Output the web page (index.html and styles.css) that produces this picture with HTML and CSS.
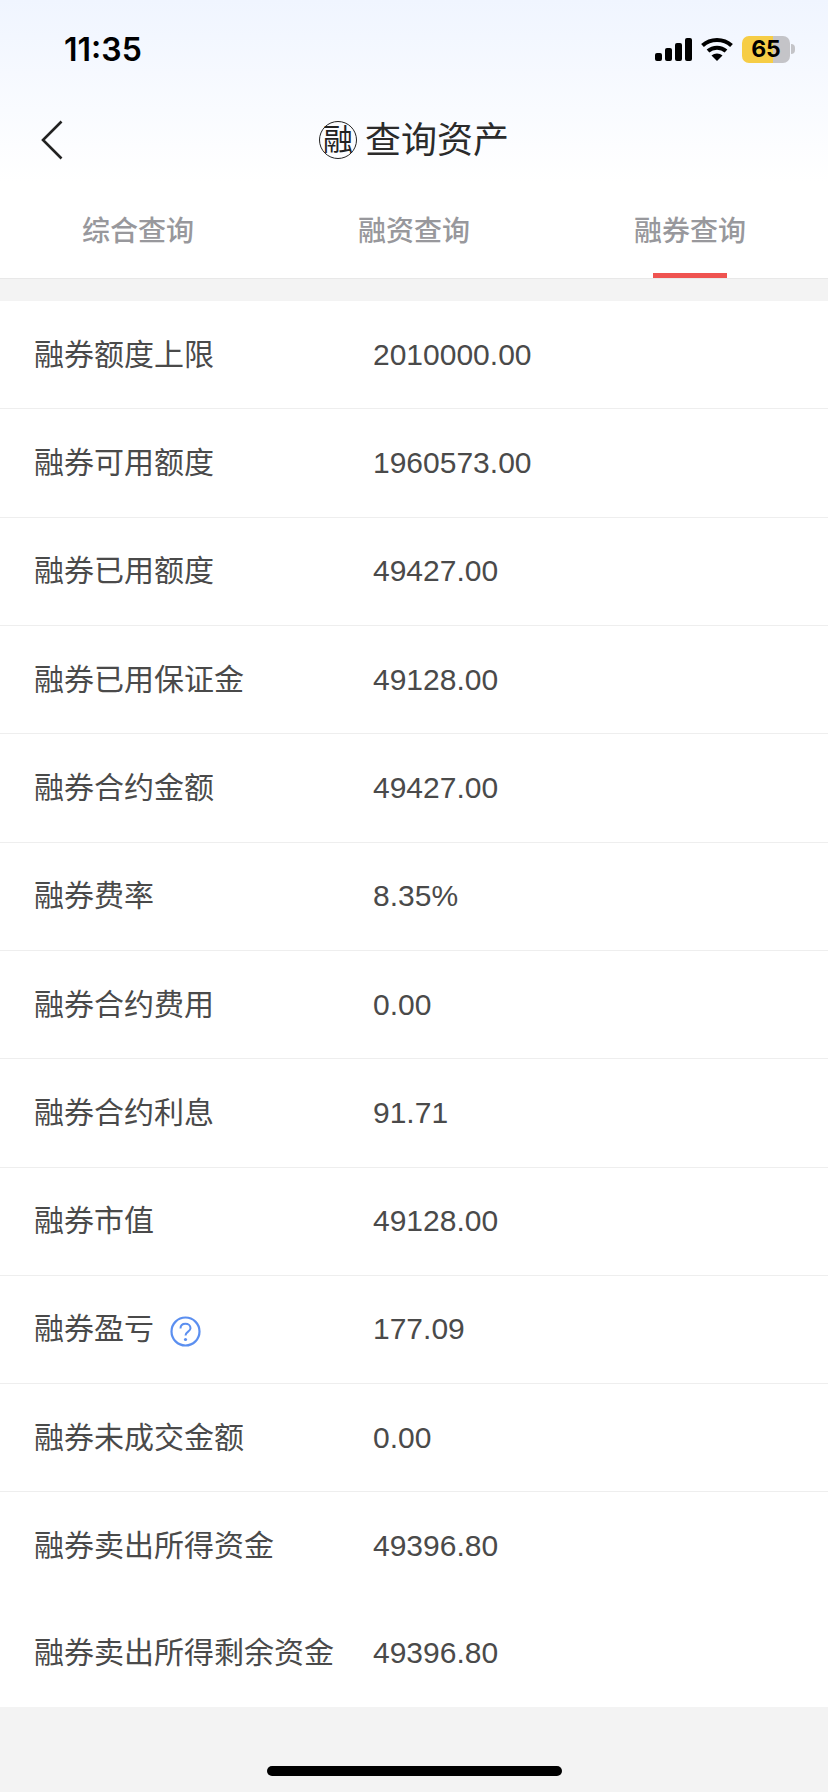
FILE: index.html
```html
<!doctype html>
<html>
<head>
<meta charset="utf-8">
<link rel="stylesheet" href="styles.css">
<title>查询资产</title>
</head>
<body>

    <div class="top">
        <div class="status">
            <span class="time">11:35</span>
            <div class="status-icons">
                <svg class="signal" width="37" height="23" viewBox="0 0 37 23">
                    <rect x="0" y="15" width="7" height="8" rx="2"/>
                    <rect x="10" y="10" width="7" height="13" rx="2"/>
                    <rect x="20" y="5" width="7" height="18" rx="2"/>
                    <rect x="30" y="0" width="7" height="23" rx="2"/>
                </svg>
                <svg class="wifi" width="32" height="24" viewBox="0 0 32 24">
                    <path d="M1.500 8.500C9.500 1 22.500 1 30.500 8.500" fill="none" stroke="#000" stroke-width="4"/>
                    <path d="M7 14C12 9.500 20 9.500 25 14" fill="none" stroke="#000" stroke-width="4"/>
                    <path d="M16 24L10.500 18.500C13.500 15.700 18.500 15.700 21.500 18.500Z"/>
                </svg>
                <div class="battery">
                    <span class="battery-body">65</span>
                    <span class="battery-nub"></span>
                </div>
            </div>
        </div>

        <header class="nav">
            <svg class="back" width="22" height="40" viewBox="0 0 22 40">
                <path d="M20.500 1.500L2 20L20.500 38.500" fill="none" stroke="#222" stroke-width="2.600"/>
            </svg>
            <div class="nav-title">
                <span class="seal">融</span>
                <h1>查询资产</h1>
            </div>
        </header>
    </div>

    <nav class="tabs">
        <div class="tab">综合查询</div>
        <div class="tab">融资查询</div>
        <div class="tab active">融券查询<i></i></div>
    </nav>

    <div class="list">
        <div class="row"><span class="label">融券额度上限</span><span class="value">2010000.00</span></div>
        <div class="row"><span class="label">融券可用额度</span><span class="value">1960573.00</span></div>
        <div class="row"><span class="label">融券已用额度</span><span class="value">49427.00</span></div>
        <div class="row"><span class="label">融券已用保证金</span><span class="value">49128.00</span></div>
        <div class="row"><span class="label">融券合约金额</span><span class="value">49427.00</span></div>
        <div class="row"><span class="label">融券费率</span><span class="value">8.35%</span></div>
        <div class="row"><span class="label">融券合约费用</span><span class="value">0.00</span></div>
        <div class="row"><span class="label">融券合约利息</span><span class="value">91.71</span></div>
        <div class="row"><span class="label">融券市值</span><span class="value">49128.00</span></div>
        <div class="row">
            <span class="label">融券盈亏
                <svg class="help" width="31" height="31" viewBox="0 0 31 31">
                    <circle cx="15.500" cy="15.500" r="14" fill="none" stroke="#5b8ff0" stroke-width="2.200"/>
                    <path d="M10.500 12.500C10.500 9.500 12.700 7.800 15.500 7.800C18.300 7.800 20.500 9.600 20.500 12.200C20.500 15.500 15.500 15.800 15.500 19.500" fill="none" stroke="#5b8ff0" stroke-width="2"/>
                    <circle cx="15.500" cy="23.500" r="1.600" fill="#5b8ff0"/>
                </svg>
            </span>
            <span class="value">177.09</span>
        </div>
        <div class="row"><span class="label">融券未成交金额</span><span class="value">0.00</span></div>
        <div class="row no-line"><span class="label">融券卖出所得资金</span><span class="value">49396.80</span></div>
        <div class="row no-line"><span class="label">融券卖出所得剩余资金</span><span class="value">49396.80</span></div>
    </div>

    <div class="home"><span class="home-bar"></span></div>

</body>
</html>
```

FILE: styles.css
```css
html
{
    background:#f3f3f3;
}
body
{
    margin:0;
    font:normal normal 30px/36px "Liberation Sans", "Noto Sans CJK SC", sans-serif;
    color:#4a4a4a;
}
.top
{
    background:linear-gradient(#f0f5ff, #fff);
    height:182px;
}
.status
{
    display:flex;
    justify-content:space-between;
    align-items:center;
    height:98px;
    padding:0 33px 0 64px;
}
.time
{
    margin-top:2px;
    font:600 32px/40px Inter, sans-serif;
    color:#000;
}
.status-icons
{
    display:flex;
    align-items:center;
    gap:9px;
}
.battery
{
    display:flex;
    align-items:center;
}
.battery-body
{
    width:48px;
    height:27px;
    border-radius:7px;
    background:linear-gradient(90deg, #f6cd46 65%, #c4c4c8 65%);
    font:bold 23px/27px Inter, sans-serif;
    color:#000;
    text-align:center;
}
.battery-nub
{
    width:4px;
    height:10px;
    margin-left:1px;
    border-radius:0 4px 4px 0;
    background:#c4c4c8;
}
.nav
{
    display:flex;
    align-items:center;
    justify-content:center;
    position:relative;
    height:84px;
}
.back
{
    position:absolute;
    left:41px;
    top:22px;
}
.nav-title
{
    display:flex;
    align-items:center;
    gap:8px;
}
h1
{
    margin:2px 0 0;
    font:normal normal 36px/40px "Liberation Sans", "Noto Sans CJK SC", sans-serif;
    color:#2b2b2b;
}
.seal
{
    display:flex;
    align-items:center;
    justify-content:center;
    box-sizing:border-box;
    width:38px;
    height:38px;
    border:1.500px solid #222;
    border-radius:50%;
    font-size:30px;
    line-height:30px;
    color:#222;
}
.tabs
{
    display:grid;
    grid-template-columns:repeat(3, 1fr);
    height:96px;
    border-bottom:1px solid #e8e8e8;
    background:#fff;
}
.tab
{
    display:flex;
    flex-direction:column;
    align-items:center;
    padding-top:32px;
    box-sizing:border-box;
    font-size:28px;
    font-weight:500;
    color:#98989c;
}
.tab i
{
    display:block;
    width:74px;
    height:5px;
    margin-top:auto;
    background:#ef5350;
}
.list
{
    display:flex;
    flex-direction:column;
    height:1406px;
    margin-top:22px;
    background:#fff;
}
.row
{
    flex:1;
    display:flex;
    align-items:center;
    padding-left:34px;
    border-bottom:1px solid #eee;
}
.no-line
{
    border-bottom:none;
}
.label
{
    display:flex;
    align-items:center;
    width:339px;
    color:#4a4a4a;
}
.help
{
    margin:4px 0 0 16px;
}
.home
{
    display:flex;
    justify-content:center;
    padding-top:59px;
}
.home-bar
{
    width:295px;
    height:10px;
    border-radius:5px;
    background:#000;
}
```
